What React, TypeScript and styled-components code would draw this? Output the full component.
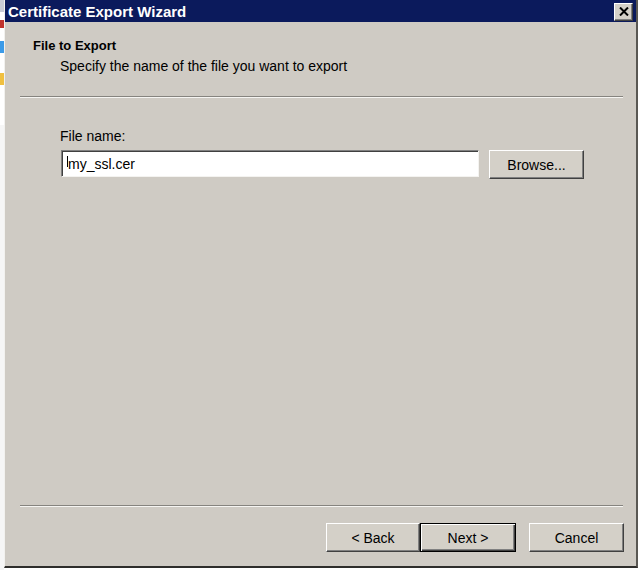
import React from "react";
import styled, { createGlobalStyle, css } from "styled-components";

const GlobalStyle = createGlobalStyle`
  html, body { margin: 0; padding: 0; background: #ffffff; }
  body { font-family: "Liberation Sans", Arial, sans-serif; }
  * { box-sizing: border-box; }
`;

const Screen = styled.div`
  display: flex;
  width: 640px;
  height: 570px;
  background: #ffffff;
  overflow: hidden;
`;

const BackStrip = styled.div`
  display: flex;
  flex-direction: column;
  width: 4px;
  background: #f4f4f4;
`;

const StripBit = styled.div<{ $c: string; $h: number }>`
  height: ${(p) => p.$h}px;
  background: ${(p) => p.$c};
`;

const Window = styled.div`
  display: flex;
  flex-direction: column;
  width: 634px;
  height: 568px;
  background: #cfcbc4;
  border-left: 1px solid #f2f1ee;
  border-right: 2px solid #5a5853;
  border-bottom: 2px solid #2e2d2b;
`;

const TitleBar = styled.div`
  display: flex;
  align-items: center;
  justify-content: space-between;
  height: 22px;
  padding: 0 3px 0 3px;
  background: #0b1a5c;
  color: #ffffff;
  font-weight: bold;
  font-size: 15px;
`;

const CloseButton = styled.div`
  display: flex;
  align-items: center;
  justify-content: center;
  width: 19px;
  height: 18px;
  margin-top: 1px;
  background: #d4d0c8;
  border-top: 1px solid #ffffff;
  border-left: 1px solid #ffffff;
  border-right: 1px solid #404040;
  border-bottom: 1px solid #404040;
  box-shadow: inset -1px -1px 0 #808080;
`;

const Header = styled.div`
  display: flex;
  flex-direction: column;
  padding: 16px 0 0 28px;
  height: 74px;
  color: #000000;
`;

const HeaderTitle = styled.div`
  font-weight: bold;
  font-size: 13px;
  line-height: 16px;
`;

const HeaderSub = styled.div`
  margin: 4px 0 0 27px;
  font-size: 14px;
  line-height: 16px;
`;

const Separator = styled.div`
  height: 2px;
  margin: 0 13px 0 15px;
  border-top: 1px solid #86847f;
  border-bottom: 1px solid #f6f5f2;
`;

const Body = styled.div`
  display: flex;
  flex-direction: column;
  flex: 1;
  padding: 30px 0 0 55px;
`;

const Label = styled.div`
  font-size: 14px;
  line-height: 16px;
  color: #000000;
  margin-bottom: 6px;
`;

const FieldRow = styled.div`
  display: flex;
  align-items: flex-start;
  gap: 10px;
`;

const Input = styled.div`
  display: flex;
  align-items: center;
  width: 418px;
  height: 27px;
  margin-left: 1px;
  padding-left: 5px;
  background: #ffffff;
  border-top: 1px solid #808080;
  border-left: 1px solid #808080;
  border-right: 1px solid #f4f3f0;
  border-bottom: 1px solid #f4f3f0;
  box-shadow: inset 1px 1px 0 #404040;
  font-size: 14px;
  color: #000000;
`;

const Caret = styled.span`
  display: inline-block;
  width: 1px;
  height: 11px;
  margin-top: -4px;
  background: #000000;
`;

const Button = styled.button<{ $w: number; $default?: boolean }>`
  width: ${(p) => p.$w}px;
  height: 29px;
  padding: 0;
  background: #d4d0c8;
  color: #000000;
  font-family: "Liberation Sans", Arial, sans-serif;
  font-size: 14px;
  border-top: 1px solid #ffffff;
  border-left: 1px solid #ffffff;
  border-right: 1px solid #404040;
  border-bottom: 1px solid #404040;
  box-shadow: inset -1px -1px 0 #808080;
  ${(p) =>
    p.$default &&
    css`
      border: 1px solid #000000;
      box-shadow: inset 1px 1px 0 #ffffff, inset -1px -1px 0 #404040,
        inset -2px -2px 0 #808080;
    `}
`;

const Footer = styled.div`
  display: flex;
  justify-content: flex-end;
  padding: 16px 12px 14px 0;
`;

const ButtonPair = styled.div`
  display: flex;
  margin-right: 13px;
`;

const CloseIcon = () => (
  <svg width="10" height="9" viewBox="0 0 10 9">
    <path d="M1 0.5 L9 8.5 M9 0.5 L1 8.5" stroke="#000" strokeWidth="2" />
  </svg>
);

const strip: [string, number][] = [
  ["#c9ccd6", 12],
  ["#ffffff", 8],
  ["#c0322c", 8],
  ["#ffffff", 13],
  ["#3c9be8", 12],
  ["#ffffff", 20],
  ["#f0c040", 12],
  ["#ffffff", 40],
  ["#f6f6f6", 443],
];

export default function App() {
  return (
    <>
      <GlobalStyle />
      <Screen>
        <BackStrip>
          {strip.map(([c, h], i) => (
            <StripBit key={i} $c={c} $h={h} />
          ))}
        </BackStrip>
        <Window>
          <TitleBar>
            <span>Certificate Export Wizard</span>
            <CloseButton>
              <CloseIcon />
            </CloseButton>
          </TitleBar>
          <Header>
            <HeaderTitle>File to Export</HeaderTitle>
            <HeaderSub>Specify the name of the file you want to export</HeaderSub>
          </Header>
          <Separator />
          <Body>
            <Label>File name:</Label>
            <FieldRow>
              <Input>
                <Caret />
                <span>my_ssl.cer</span>
              </Input>
              <Button $w={95}>Browse...</Button>
            </FieldRow>
          </Body>
          <Separator />
          <Footer>
            <ButtonPair>
              <Button $w={94}>&lt; Back</Button>
              <Button $w={96} $default>
                Next &gt;
              </Button>
            </ButtonPair>
            <Button $w={95}>Cancel</Button>
          </Footer>
        </Window>
      </Screen>
    </>
  );
}
